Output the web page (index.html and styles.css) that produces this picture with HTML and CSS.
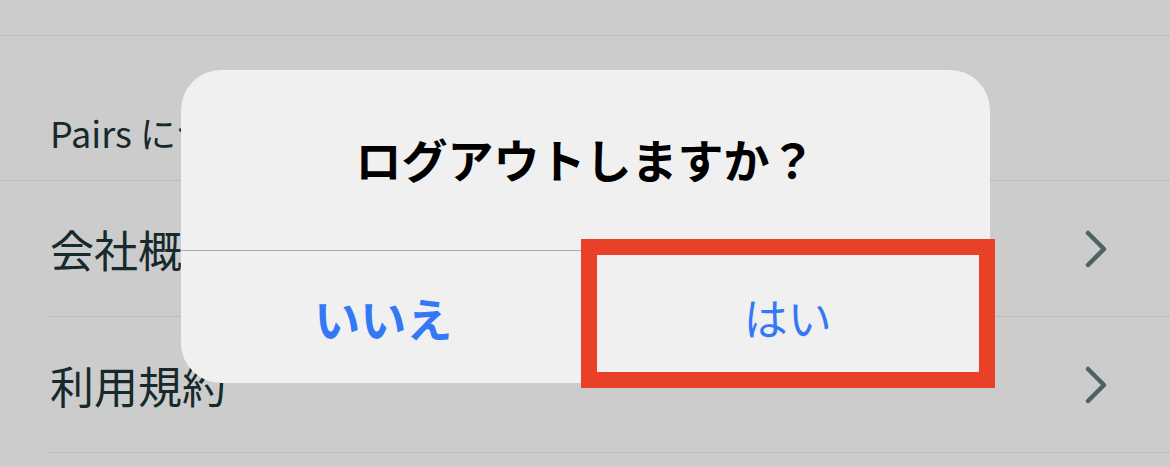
FILE: index.html
```html
<!DOCTYPE html>
<html lang="ja">
<head>
    <meta charset="UTF-8">
    <meta name="viewport" content="width=device-width, initial-scale=1.0">
    <title>設定</title>
    <link rel="stylesheet" href="styles.css">
</head>
<body>
    <div class="screen">
        <div class="topbar"></div>
        <div class="section-head">Pairs について</div>
        <ul class="menu">
            <li class="menu-item">
                <span>会社概要</span>
                <svg class="chevron" width="24" height="40" viewBox="0 0 24 40"><path d="M4 4 L20 20 L4 36"/></svg>
            </li>
            <li class="menu-item">
                <span>利用規約</span>
                <svg class="chevron" width="24" height="40" viewBox="0 0 24 40"><path d="M4 4 L20 20 L4 36"/></svg>
            </li>
        </ul>
    </div>

    <div class="alert">
        <div class="alert-title">ログアウトしますか？</div>
        <div class="alert-actions">
            <button class="alert-btn alert-btn-cancel">いいえ</button>
            <button class="alert-btn alert-btn-ok">はい</button>
        </div>
    </div>
</body>
</html>
```

FILE: styles.css
```css
body {
    margin: 0;
    background-color: #cccccc;
    font-family: "Noto Sans CJK JP", "Noto Sans", sans-serif;
    color: #16292b;
    overflow: hidden;
}
.screen {
    width: 1170px;
}
.topbar {
    height: 35px;
    border-bottom: 1px solid #bcbcbc;
}
.section-head {
    height: 145px;
    display: flex;
    align-items: flex-end;
    padding: 0 0 22px 50px;
    box-sizing: border-box;
    border-bottom: 1px solid #bcbcbc;
    font-size: 36px;
}
.menu {
    list-style: none;
    margin: 0;
    padding: 0;
}
.menu-item {
    height: 136px;
    margin-left: 48px;
    padding: 0 62px 0 2px;
    box-sizing: border-box;
    display: flex;
    align-items: center;
    justify-content: space-between;
    border-bottom: 1px solid #bcbcbc;
    font-size: 44px;
}
.chevron path {
    fill: none;
    stroke: #4d6263;
    stroke-width: 4.5;
    stroke-linecap: round;
    stroke-linejoin: round;
}
.alert {
    position: absolute;
    left: 181px;
    top: 70px;
    width: 809px;
    height: 313px;
    border-radius: 40px;
    background-color: #f0f0f0;
    display: flex;
    flex-direction: column;
}
.alert-title {
    height: 176px;
    padding-bottom: 4px;
    display: flex;
    align-items: center;
    justify-content: center;
    border-bottom: 1px solid #a9a9a9;
    font-size: 46px;
    font-weight: bold;
    color: #000;
}
.alert-actions {
    flex: 1;
    display: flex;
}
.alert-btn {
    flex: 1;
    border: none;
    background: none;
    font-family: inherit;
    font-size: 44px;
    color: #3478f6;
    padding: 0;
}
.alert-btn-cancel {
    font-size: 46px;
    font-weight: bold;
}
.alert-btn-ok {
    position: relative;
}
.alert-btn-ok::after {
    content: "";
    position: absolute;
    top: -12px;
    left: -5px;
    right: -5px;
    bottom: -5px;
    border: 16px solid #e84128;
}
```
